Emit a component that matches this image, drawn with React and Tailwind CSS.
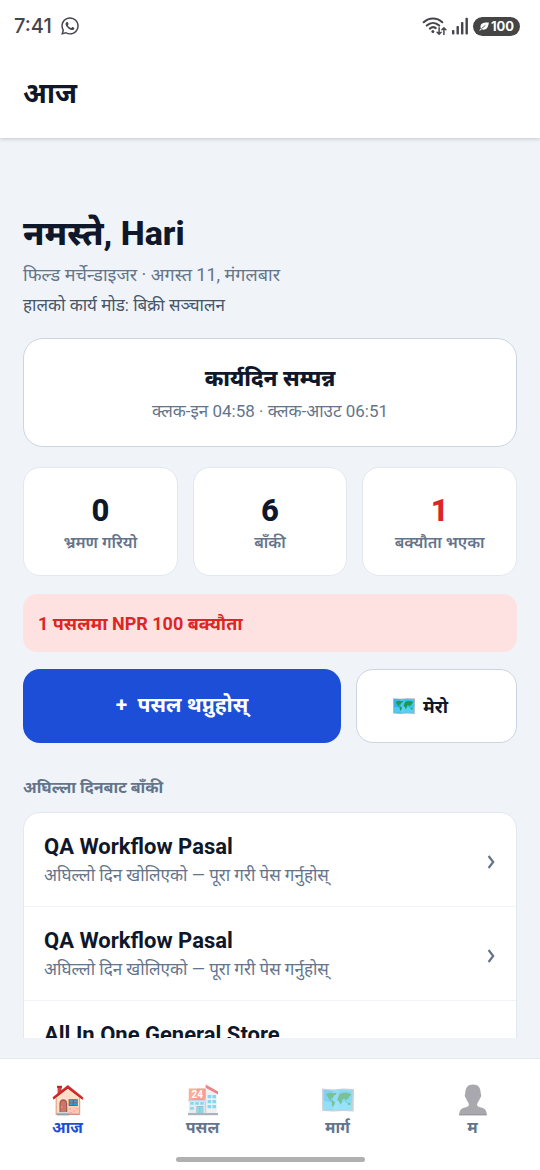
import { useState } from 'react';
import { FaWhatsapp } from 'react-icons/fa';

const stats = [
  { label: 'भ्रमण गरियो', value: 0 },
  { label: 'बाँकी', value: 6 },
  { label: 'बक्यौता भएका', value: 1, danger: true },
];

const visits = [
  { id: 1, name: 'QA Workflow Pasal' },
  { id: 2, name: 'QA Workflow Pasal' },
  { id: 3, name: 'All In One General Store' },
];

const WifiIcon = () => (
  <svg width="26" height="19" viewBox="0 0 25 19" fill="none" stroke="#45454b" strokeLinecap="round">
    <path d="M1.2 5.2C6.6 0.2 14.4 0.2 19.8 5.2" strokeWidth="2.1" />
    <path d="M4.3 8.6C8 5.2 13 5.2 16.7 8.6" strokeWidth="2.1" />
    <path d="M7.4 11.6C9.2 10 11.6 10 13.2 11.2" strokeWidth="2.1" />
    <circle cx="10.4" cy="14.6" r="1.5" fill="#45454b" stroke="none" />
    <path d="M16.6 10.8v6.4M14.6 15.3l2 2 2-2M21.4 17.4v-6.6M19.4 12.7l2-2 2 2" strokeWidth="1.5" />
  </svg>
);

const SignalIcon = () => (
  <svg width="17" height="18" viewBox="0 0 17 18" fill="#45454b">
    <rect x="0" y="13" width="2.4" height="4.5" rx="0.8" />
    <rect x="4.5" y="9" width="2.4" height="8.5" rx="0.8" />
    <rect x="9" y="5" width="2.4" height="12.5" rx="0.8" />
    <rect x="13.5" y="0.8" width="2.4" height="16.7" rx="0.8" />
  </svg>
);

const LeafIcon = () => (
  <svg width="10" height="9" viewBox="0 0 10 9">
    <path d="M9.8 0.6C5.4 0.2 1.4 1 1.5 4.8c0 .8.2 1.2.5 1.7L0.3 8.2l.6.6 1.8-1.5C7.4 8.7 9.4 5.6 9.8 0.6z" fill="#fff" />
    <path d="M2.4 6.6L6.4 3.4" stroke="#454545" strokeWidth="0.8" />
  </svg>
);

const MapIcon = ({ className }) => (
  <svg className={className} viewBox="0 0 32 32">
    <path d="M0 4.6l11 .8 10-.8 11 .5-.4 22.4-10.6-.6-10 .6L.2 27z" fill="#a9b3c0" />
    <path d="M1.6 6l9.8.6V26l-9.6-.4z" fill="#2cb4ec" />
    <path d="M11.4 6.6l5-.8v19.6l-5 .6z" fill="#4cc9f2" />
    <path d="M16.4 5.8l14 .6-.6 19.2-13.4-.2z" fill="#35c3f2" />
    <path d="M2 17l9.4 1.6 5-1.4 13.4 1.4V25.6L2 25.6z" fill="#62dbfa" opacity="0.6" />
    <path d="M4 10.4l3-1.6 4 .4 3.6-.8-.6 2-2 1.2-.8 2-2 .6-.6 1.6 2 1-.8.6-2.4-1.6L5.8 13z" fill="#1e9a55" />
    <path d="M9.8 16.6l3.4 1.4-.8 2.6-1.6 2.6-1-2.8z" fill="#1e9a55" />
    <path d="M16.6 12.4l1-2.4 3.4-1.2 4-.2 4 1.4-.6 2-1.4.6-.4 2-1.8.6-.8 1.6-1.6-2-1.8.4-.6 3-1.6 2.4-1.4-3.4-1.8-1.4z" fill="#1e9a55" />
    <path d="M25.6 19l2.4-.4.8 2-2.6.6z" fill="#1e9a55" />
    <path d="M22.6 16.8l2 1.4 1.6.2-1.4.6z" fill="#1e9a55" />
  </svg>
);

const HomeIcon = ({ className }) => (
  <svg className={className} viewBox="0 0 32 32">
    <path d="M5.6 2.6h4v7l-4 3z" fill="#d74242" />
    <path d="M5 1.8h5v2H5z" fill="#b92227" />
    <path d="M4 13L15.8 3 28 13.6V31H4z" fill="#fce0c4" />
    <path d="M15 22.6h13V31H15z" fill="#ffc6ba" />
    <path d="M4 29.6h24V31H4z" fill="#d98c80" />
    <path d="M27 14h1.2v17H27zM3.6 14h1.2v17H3.6z" fill="#e0a58e" />
    <path d="M15.8 1L0.6 13.2l1 2.2L15.8 4.6 30.4 15.6l1-2.2z" fill="#d92b2f" />
    <path d="M1.4 15L15.8 4l14.8 11.4" fill="none" stroke="#a91d21" strokeWidth="0.8" />
    <path d="M7.4 28.6v-9c0-5.8 7.8-5.8 7.8 0v9z" fill="#a5594d" />
    <path d="M8.6 28v-8c0-4.2 5.4-4.2 5.4 0v8z" fill="#cf7568" />
    <circle cx="9.6" cy="23" r="0.6" fill="#fbd0a0" />
    <path d="M16.6 15.2h9.2v6.8h-9.2z" fill="#a84d42" />
    <path d="M17.6 16.2h3.2v2.2h-3.2zM21.8 16.2h3.2v2.2h-3.2zM17.6 19.2h3.2V21h-3.2zM21.8 19.2h3.2V21h-3.2z" fill="#25a9e4" />
    <path d="M17 25h2M21 27h2M24.4 24.8h1.8M18 28.4h1.8" stroke="#ea9488" strokeWidth="0.7" />
    <path d="M6.2 28h10v1.6h-10z" fill="#cfd8dc" />
    <path d="M5 29.4h12.4v2H5z" fill="#94a2aa" />
  </svg>
);

const StoreIcon = ({ className }) => (
  <svg className={className} viewBox="0 0 32 32">
    <path d="M19 3.6L29.8 10v21H19z" fill="#e4e9ee" />
    <path d="M18.6 0.6l12.4 7v3L18.6 3.8z" fill="#e32f35" />
    <path d="M1.8 14h17.4v17H1.8z" fill="#d7dfe6" />
    <path d="M1.8 4.6h17v11.6h-17z" fill="#fa7855" />
    <path d="M10.4 4.6h8.4v11.6H4.6z" fill="#f04848" opacity="0.5" />
    <path d="M1 16h18.4v1.2H1zM17.8 28.8h1.4V14h-1.4z" fill="#aab4bc" />
    <path d="M1 29h30v2.2H1z" fill="#78838b" />
    <path d="M20.6 11h3.6v3.2h-3.6zM25.4 11H29v3.2h-3.6zM20.6 16h3.6v3.2h-3.6zM25.4 16H29v3.2h-3.6zM20.6 21h3.6v3.2h-3.6zM25.4 21H29v3.2h-3.6z" fill="#35bfeb" />
    <path d="M3.2 18h3.6v2.8H3.2zM8.2 18h3.6v2.8H8.2zM13.2 18h3.6v2.8h-3.6zM3.2 23h3.6v2.8H3.2z" fill="#35bfeb" />
    <path d="M9.4 22h7v7.4h-7z" fill="#6e7d88" />
    <path d="M10 22.6h2.5V29H10zM13.3 22.6h2.5V29h-2.5z" fill="#35c6ef" />
    <text x="10.3" y="13.9" textAnchor="middle" fontSize="10" fontWeight="700" fill="#fff">24</text>
  </svg>
);

const PersonIcon = ({ className }) => (
  <svg className={className} viewBox="0 0 32 32">
    <path
      d="M16 0.4c5.2 0 7.7 3.4 7.7 8.6 0 1 .8 1.2.5 2.8-.2 1.6-1 1.8-1.3 2.8-.7 2.6-2.6 4-2.8 5.6-.2 2 1 2.6 4 3.2 4.4.8 5.7 3.6 5.7 7.8H2.2c0-4.2 1.3-7 5.7-7.8 3-.6 4.2-1.2 4-3.2-.2-1.6-2.1-3-2.8-5.6-.3-1-1.1-1.2-1.3-2.8-.3-1.6.5-1.8.5-2.8 0-5.2 2.5-8.6 7.7-8.6z"
      fill="#6f7079"
    />
    <path d="M2.4 30.2h27.2v1H2.2z" fill="#4f5057" />
  </svg>
);

const ChevronIcon = () => (
  <svg className="mt-0.5" width="9" height="14" viewBox="0 0 9 14" fill="none" stroke="#64748b" strokeWidth="2.2">
    <path d="M1.6 1L6.2 7L1.6 13" />
  </svg>
);

const tabs = [
  { id: 'today', label: 'आज', Icon: HomeIcon },
  { id: 'shops', label: 'पसल', Icon: StoreIcon },
  { id: 'route', label: 'मार्ग', Icon: MapIcon },
  { id: 'me', label: 'म', Icon: PersonIcon },
];

const StatusBar = () => (
  <div className="flex items-center justify-between h-[52px] pl-3.5 pr-5 text-[#45454b]">
    <div className="flex items-center gap-2">
      <span className="font-['Inter'] text-[20px] font-medium">7:41</span>
      <FaWhatsapp className="text-[20px]" />
    </div>
    <div className="flex items-center gap-1">
      <WifiIcon />
      <SignalIcon />
      <div className="flex items-center justify-center gap-0.5 w-[47px] h-[19px] rounded-full bg-[#454545] text-white">
        <LeafIcon />
        <span className="font-['Inter'] text-[13px] leading-none font-bold">100</span>
      </div>
    </div>
  </div>
);

const App = () => {
  const [active, setActive] = useState('today');

  return (
    <div className="flex flex-col h-screen bg-[#f0f4f9] text-[#0f172a] font-[Roboto,'Noto_Sans',sans-serif]">
      <header className="relative bg-white shadow-[0_1px_4px_rgba(15,23,42,0.2)]">
        <StatusBar />
        <div className="h-[86px] px-[23px] pt-6">
          <h1 className="text-[28px] leading-9 font-bold">आज</h1>
        </div>
      </header>

      <main className="flex-1 min-h-0 mb-5 px-[23px] pt-[72px] overflow-y-auto [scrollbar-width:none]">
        <h2 className="text-[34px] leading-[46px] font-extrabold">नमस्ते, Hari</h2>
        <p className="mt-1 text-[18px] leading-[30px] text-[#64748b]">फिल्ड मर्चेन्डाइजर · अगस्त 11, मंगलबार</p>
        <p className="text-[17px] leading-[30px] text-[#475569]">हालको कार्य मोड: बिक्री सञ्चालन</p>

        <section className="flex flex-col items-center justify-center h-[109px] mt-[18px] rounded-[20px] border border-[#cbd5e1] bg-white">
          <h3 className="text-[22px] leading-9 font-extrabold">कार्यदिन सम्पन्न</h3>
          <p className="text-[17px] leading-7 text-[#64748b]">क्लक-इन 04:58 · क्लक-आउट 06:51</p>
        </section>

        <div className="grid grid-cols-3 gap-[15px] mt-5">
          {stats.map((stat) => (
            <div
              key={stat.label}
              className="flex flex-col items-center justify-center h-[109px] pt-1.5 rounded-[17px] border border-[#e2e8f0] bg-white"
            >
              <span className={stat.danger ? 'text-[31px] leading-9 font-extrabold text-[#dc2626]' : 'text-[31px] leading-9 font-extrabold'}>
                {stat.value}
              </span>
              <span className="text-[16px] leading-7 font-semibold text-[#64748b]">{stat.label}</span>
            </div>
          ))}
        </div>

        <p className="flex items-center h-[58px] mt-[18px] px-[15px] rounded-[14px] bg-[#fee2e2] text-[18px] font-bold text-[#dc2626]">
          1 पसलमा NPR 100 बक्यौता
        </p>

        <div className="grid grid-cols-[1fr_161px] gap-[15px] mt-[17px]">
          <button type="button" className="h-[74px] rounded-[17px] bg-[#1d4ed8] text-[21px] font-bold text-white">
            +&nbsp; पसल थप्नुहोस्
          </button>
          <button
            type="button"
            className="flex items-center justify-center gap-2 h-[74px] pr-8 rounded-[17px] border border-[#cbd5e1] bg-white text-[18px] font-bold"
          >
            <MapIcon className="size-[22px]" />
            मेरो
          </button>
        </div>

        <h3 className="mt-[30px] text-[16px] leading-[30px] font-bold text-[#64748b]">अघिल्ला दिनबाट बाँकी</h3>

        <ul className="mt-[9px] rounded-[17px] border border-[#e2e8f0] bg-white">
          {visits.map((visit) => (
            <li key={visit.id} className="border-b border-[#f1f5f9] last:border-b-0">
              <a href="#" className="flex items-center justify-between h-[93px] pt-[3px] px-5">
                <div>
                  <div className="text-[22px] leading-7 font-bold">{visit.name}</div>
                  <div className="text-[17px] leading-7 text-[#64748b]">अघिल्लो दिन खोलिएको — पूरा गरी पेस गर्नुहोस्</div>
                </div>
                <ChevronIcon />
              </a>
            </li>
          ))}
        </ul>
      </main>

      <nav className="border-t border-[#e2e8f0] bg-white">
        <div className="grid grid-cols-4 pt-[25px]">
          {tabs.map(({ id, label, Icon }) => (
            <button key={id} type="button" onClick={() => setActive(id)} className="flex flex-col items-center">
              <Icon className={active === id ? 'size-8' : 'size-8 opacity-60'} />
              <span className={active === id ? 'text-[16px] leading-6 font-bold text-[#1d4ed8]' : 'text-[16px] leading-6 font-bold text-[#64748b]'}>
                {label}
              </span>
            </button>
          ))}
        </div>
        <div className="w-[35%] h-[5px] mt-[17px] mb-2 mx-auto rounded-full bg-[#b0b0b0]" />
      </nav>
    </div>
  );
};

export default App;
